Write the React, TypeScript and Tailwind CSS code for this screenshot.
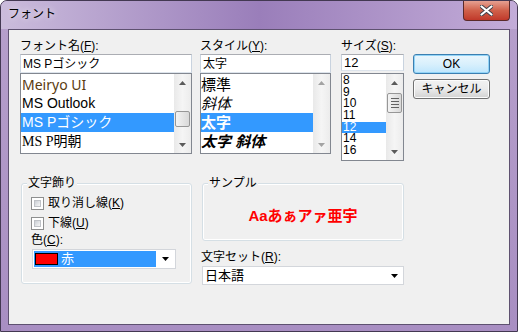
import React from "react";

const ui = "font-['Liberation_Sans','Noto_Sans_CJK_JP',sans-serif]";

const Arrow = ({ up, color }: { up?: boolean; color: string }) => (
  <svg width="7" height="4" viewBox="0 0 7 4">
    <path d={up ? "M3.5 0L7 4H0z" : "M0 0H7L3.5 4z"} fill={color} />
  </svg>
);

interface ScrollBarProps {
  thumbTop?: number;
  thumbHeight?: number;
  grip?: boolean;
  disabled?: boolean;
}

const ScrollBar: React.FC<ScrollBarProps> = ({ thumbTop, thumbHeight, grip, disabled }) => {
  const color = disabled ? "#a3a3a3" : "#5b5b5b";
  return (
    <div className="w-[17px] h-full flex flex-col bg-gradient-to-r from-[#e9e9e9] via-[#f5f5f5] to-[#ececec]">
      <div className="h-[17px] flex items-center justify-center">
        <Arrow up color={color} />
      </div>
      <div className="flex-1 relative">
        {thumbHeight && (
          <div
            className="absolute left-[1px] right-[1px] rounded-[2px] border border-[#979797] bg-gradient-to-r from-[#f4f4f4] to-[#d9d9d9] flex flex-col items-center justify-center gap-[2px]"
            style={{ top: thumbTop, height: thumbHeight }}
          >
            {grip && (
              <>
                <div className="w-[8px] h-[1px] bg-[#626262]" />
                <div className="w-[8px] h-[1px] bg-[#626262]" />
                <div className="w-[8px] h-[1px] bg-[#626262]" />
                <div className="w-[8px] h-[1px] bg-[#626262]" />
              </>
            )}
          </div>
        )}
      </div>
      <div className="h-[17px] flex items-center justify-center">
        <Arrow color={color} />
      </div>
    </div>
  );
};

const Label = ({ text, mn, after = "" }: { text: string; mn: string; after?: string }) => (
  <div className="h-[15px] leading-[15px] text-[12px] text-black whitespace-nowrap">
    {text}(<span className="underline">{mn}</span>){after}
  </div>
);

const TextBox = ({ value, h = 19, cls = "" }: { value: string; h?: number; cls?: string }) => (
  <div
    className={`bg-white border border-[#abadb3] border-l-[#c9d3df] border-r-[#c9d3df] border-b-[#dde4ec] flex items-center pl-[2px] text-[12px] text-black ${cls}`}
    style={{ height: h }}
  >
    {value}
  </div>
);

const Button = ({ text, primary }: { text: string; primary?: boolean }) => (
  <div
    className={`h-[20px] rounded-[3px] border flex items-center justify-center text-[12px] text-black ${
      primary
        ? "border-[#3c7fb1] bg-gradient-to-b from-[#eaf6fd] via-[#d9f0fc] to-[#bee6fd] shadow-[inset_0_0_0_1px_#92d4f7]"
        : "border-[#707070] bg-gradient-to-b from-[#f2f2f2] via-[#ebebeb] to-[#d2d2d2] shadow-[inset_0_0_0_1px_#fcfcfc]"
    }`}
  >
    {text}
  </div>
);

const CheckBox = ({ text, mn }: { text: string; mn: string }) => (
  <div className="flex items-center h-[13px]">
    <div className="w-[13px] h-[13px] border border-[#8e8f8f] bg-white p-[2px]">
      <div className="w-full h-full bg-gradient-to-br from-[#cbcfd5] to-[#f6f6f6] border border-[#bfc2c7]" />
    </div>
    <div className="ml-[4px] text-[12px] leading-[13px] text-black whitespace-nowrap">
      {text}(<span className="underline">{mn}</span>)
    </div>
  </div>
);

const GroupBox = ({ title, w, h, children }: { title: string; w: number; h: number; children?: React.ReactNode }) => (
  <div
    className="relative rounded-[3px] border border-[#d5dfe5] shadow-[inset_0_0_0_1px_#ffffff]"
    style={{ width: w, height: h }}
  >
    <div className="absolute -top-[8px] left-[5px] px-[1px] bg-[#f0f0f0] text-[12px] leading-[15px] text-black">
      {title}
    </div>
    {children}
  </div>
);

const fonts = [
  { name: "Meiryo UI", cls: "font-['Noto_Sans',sans-serif] text-[#5a3a10]" },
  { name: "MS Outlook", cls: "font-['Liberation_Sans',sans-serif] text-black" },
  { name: "MS Pゴシック", cls: "text-white bg-[#3399ff]" },
  { name: "MS P明朝", cls: "font-['Liberation_Serif','Noto_Sans_CJK_JP',serif] text-black" },
];

const styles = [
  { name: "標準", cls: "text-black" },
  { name: "斜体", cls: "italic text-black" },
  { name: "太字", cls: "font-bold text-white bg-[#3399ff]" },
  { name: "太字 斜体", cls: "font-bold italic text-black" },
];

const sizes = ["8", "9", "10", "11", "12", "14", "16"];

export default function App() {
  return (
    <div className={`${ui} w-[518px] h-[332px] rounded-t-[7px] border border-[#433852] bg-gradient-to-b from-[#b7a0cc] to-[#a88ec2] overflow-hidden`}>
      <div className="h-[28px] flex items-start bg-gradient-to-r from-[#cbbcdc] via-[#9a7eba] to-[#c3acd8]">
        <div className="pl-[7px] pt-[6px] text-[12px] leading-[15px] text-black [text-shadow:0_0_6px_#ffffff]">
          フォント
        </div>
        <div className="ml-auto mr-[7px] w-[47px] h-[20px] rounded-b-[4px] border border-t-0 border-[#5a2a2a] bg-gradient-to-b from-[#e5a092] via-[#d0604a] to-[#c0382a] flex items-center justify-center">
          <svg width="13" height="11" viewBox="0 0 13 11">
            <path
              d="M1.5 1.5L11.5 9.5M11.5 1.5L1.5 9.5"
              stroke="#40404a"
              strokeWidth="4"
              strokeLinecap="round"
            />
            <path
              d="M1.5 1.5L11.5 9.5M11.5 1.5L1.5 9.5"
              stroke="#ffffff"
              strokeWidth="2.2"
              strokeLinecap="round"
            />
          </svg>
        </div>
      </div>

      <div className="mx-[7px] h-[296px] border border-[#5e5170] bg-[#f0f0f0]">
        <div className="flex pt-[9px] pl-[11px]">
          <div className="w-[172px]">
            <Label text="フォント名" mn="F" after=":" />
            <TextBox value="MS Pゴシック" />
            <div className="h-[81px] border border-[#828790] bg-white flex">
              <div className="flex-1 pt-[1px]">
                {fonts.map((f) => (
                  <div key={f.name} className={`h-[19px] leading-[19px] text-[14px] pl-[1px] whitespace-nowrap ${f.cls}`}>
                    {f.name}
                  </div>
                ))}
              </div>
              <ScrollBar thumbTop={20} thumbHeight={16} />
            </div>
          </div>

          <div className="w-[131px] ml-[8px]">
            <Label text="スタイル" mn="Y" after=":" />
            <TextBox value="太字" />
            <div className="h-[81px] border border-[#828790] bg-white flex">
              <div className="flex-1 pt-[1px]">
                {styles.map((s) => (
                  <div key={s.name} className={`h-[19px] leading-[19px] text-[15px] whitespace-nowrap ${s.cls}`}>
                    {s.name}
                  </div>
                ))}
              </div>
              <ScrollBar disabled />
            </div>
          </div>

          <div className="w-[63px] ml-[10px]">
            <Label text="サイズ" mn="S" after=":" />
            <TextBox value="12" h={17} cls="mb-[2px] text-[13px]" />
            <div className="h-[88px] border border-[#828790] bg-white flex">
              <div className="flex-1 pt-[1px]">
                {sizes.map((s) => (
                  <div
                    key={s}
                    className={`h-[11.7px] leading-[11.7px] text-[12px] pl-[1px] ${
                      s === "12" ? "bg-[#3399ff] text-white" : "text-black"
                    }`}
                  >
                    {s}
                  </div>
                ))}
              </div>
              <ScrollBar thumbTop={2} thumbHeight={20} grip />
            </div>
          </div>

          <div className="w-[77px] ml-[9px] pt-[15px] flex flex-col gap-[5px]">
            <Button text="OK" primary />
            <Button text="キャンセル" />
          </div>
        </div>

        <div className="flex pl-[12px] mt-[22px]">
          <GroupBox title="文字飾り" w={171} h={101}>
            <div className="pl-[9px] pt-[13px]">
              <CheckBox text="取り消し線" mn="K" />
              <div className="h-[7px]" />
              <CheckBox text="下線" mn="U" />
              <div className="mt-[3px] h-[14px] leading-[14px] text-[12px] text-black">
                色(<span className="underline">C</span>):
              </div>
              <div className="ml-[1px] mt-[2px] w-[144px] h-[20px] bg-white border border-[#d3d6db] flex items-center pl-[1px] pr-[4px]">
                <div className="w-[122px] h-[16px] bg-[#3399ff] flex items-center pl-[1px]">
                  <div className="w-[23px] h-[12px] bg-[#ff0000] border border-black" />
                  <div className="ml-[3px] text-[13px] leading-[14px] text-white">赤</div>
                </div>
                <div className="ml-auto mr-[2px]">
                  <Arrow color="#000000" />
                </div>
              </div>
            </div>
          </GroupBox>

          <div className="ml-[10px] w-[202px]">
            <GroupBox title="サンプル" w={202} h={58}>
              <div className="h-full flex items-center justify-center pt-[9px]">
                <span className="text-[15px] font-bold text-[#ff0000] whitespace-nowrap">Aaあぁアァ亜宇</span>
              </div>
            </GroupBox>
            <div className="mt-[9px] -ml-[1px] h-[14px] leading-[14px] text-[12px] text-black">
              文字セット(<span className="underline">R</span>):
            </div>
            <div className="mt-[2px] h-[19px] bg-white border border-[#d3d6db] flex items-center pl-[2px] pr-[5px] text-[13px] text-black">
              日本語
              <div className="ml-auto">
                <Arrow color="#000000" />
              </div>
            </div>
          </div>
        </div>
      </div>
    </div>
  );
}
